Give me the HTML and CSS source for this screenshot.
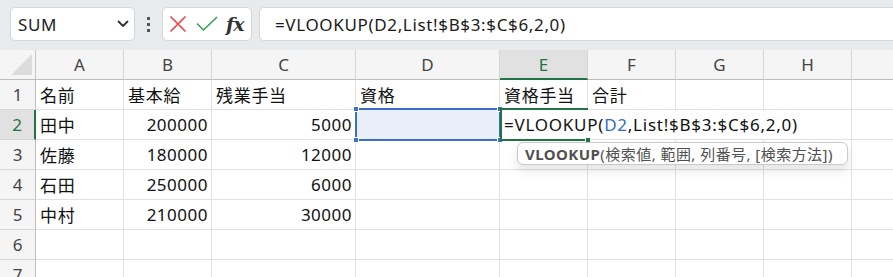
FILE: index.html
```html
<!DOCTYPE html>
<html lang="ja">
<head>
<meta charset="utf-8">
<title>Excel</title>
<link rel="stylesheet" href="styles.css">
</head>
<body>
<div class="app">
  <div class="topbar">
    <div class="namebox">
      <span class="nb-text">SUM</span>
      <svg class="chev" width="12" height="8" viewBox="0 0 12 8"><path d="M1.5 1.5 L6 6 L10.5 1.5" fill="none" stroke="#333" stroke-width="1.8" stroke-linecap="round" stroke-linejoin="round"/></svg>
    </div>
    <div class="kebab"><i></i><i></i><i></i></div>
    <div class="fxbox">
      <svg width="18" height="18" viewBox="0 0 18 18"><path d="M2 2 L16 16 M16 2 L2 16" stroke="#e5474d" stroke-width="1.7" stroke-linecap="round"/></svg>
      <svg width="22" height="16" viewBox="0 0 22 16"><path d="M1.5 8 L7.5 14 L20.5 1.5" fill="none" stroke="#3aa35a" stroke-width="1.7" stroke-linecap="round" stroke-linejoin="round"/></svg>
      <span class="fx">fx</span>
    </div>
    <div class="formula">=VLOOKUP(D2,List!$B$3:$C$6,2,0)</div>
  </div>
  <div class="sheet">
    <div class="grid">
      <div class="corner"><svg width="24" height="24" viewBox="0 0 24 24"><path d="M23 2 L23 23 L2 23 Z" fill="#dcdcdc"/></svg></div>
      <div class="ch">A</div><div class="ch">B</div><div class="ch">C</div><div class="ch">D</div><div class="ch act">E</div><div class="ch">F</div><div class="ch">G</div><div class="ch">H</div><div class="ch last"></div>

      <div class="rh">1</div><div class="c">名前</div><div class="c">基本給</div><div class="c">残業手当</div><div class="c">資格</div><div class="c">資格手当</div><div class="c">合計</div><div class="c"></div><div class="c"></div><div class="c"></div>

      <div class="rh act">2</div><div class="c">田中</div><div class="c n">200000</div><div class="c n">5000</div><div class="c"></div><div class="c span4">=VLOOKUP(<span class="ref">D2</span>,List!$B$3:$C$6,2,0)</div><div class="c"></div>

      <div class="rh">3</div><div class="c">佐藤</div><div class="c n">180000</div><div class="c n">12000</div><div class="c"></div><div class="c"></div><div class="c"></div><div class="c"></div><div class="c"></div><div class="c"></div>

      <div class="rh">4</div><div class="c">石田</div><div class="c n">250000</div><div class="c n">6000</div><div class="c"></div><div class="c"></div><div class="c"></div><div class="c"></div><div class="c"></div><div class="c"></div>

      <div class="rh">5</div><div class="c">中村</div><div class="c n">210000</div><div class="c n">30000</div><div class="c"></div><div class="c"></div><div class="c"></div><div class="c"></div><div class="c"></div><div class="c"></div>

      <div class="rh">6</div><div class="c"></div><div class="c"></div><div class="c"></div><div class="c"></div><div class="c"></div><div class="c"></div><div class="c"></div><div class="c"></div><div class="c"></div>

      <div class="rh">7</div><div class="c"></div><div class="c"></div><div class="c"></div><div class="c"></div><div class="c"></div><div class="c"></div><div class="c"></div><div class="c"></div><div class="c"></div>
    </div>
    <div class="refsel"><i class="h tl"></i><i class="h tr"></i><i class="h bl"></i><i class="h br"></i></div>
    <div class="active"><i class="fill"></i></div>
    <div class="tip"><b>VLOOKUP</b>(検索値, 範囲, 列番号, [検索方法])</div>
  </div>
</div>
</body>
</html>
```

FILE: styles.css
```css
* { box-sizing: border-box; }
html, body { margin: 0; padding: 0; }
body {
  width: 893px;
  height: 277px;
  overflow: hidden;
  background: #ffffff;
  font-family: "Noto Sans", "Noto Sans CJK JP", sans-serif;
  color: #1a1a1a;
}
.app { width: 893px; height: 277px; overflow: hidden; }

.topbar {
  height: 50px;
  background: #e8ebee;
  display: flex;
  align-items: flex-start;
  padding: 7px 0 0 10px;
}
.namebox {
  width: 125px;
  height: 34px;
  background: #fff;
  border: 1px solid #d4d6d9;
  border-radius: 5px;
  display: flex;
  align-items: center;
  justify-content: space-between;
  padding: 0 5px 0 7px;
}
.nb-text { font-size: 17px; color: #222; letter-spacing: 0.6px; }
.chev { display: block; }
.kebab {
  width: 27px;
  height: 34px;
  display: flex;
  flex-direction: column;
  align-items: center;
  justify-content: center;
  gap: 3px;
}
.kebab i { display: block; width: 3px; height: 3px; background: #555; }
.fxbox {
  width: 90px;
  height: 34px;
  background: #fff;
  border: 1px solid #d4d6d9;
  border-radius: 5px;
  display: flex;
  align-items: center;
  padding: 0 0 0 6px;
  gap: 9px;
}
.fxbox svg { display: block; }
.fx {
  font-family: "DejaVu Serif", "Liberation Serif", serif;
  font-style: italic;
  font-weight: bold;
  font-size: 19px;
  color: #333;
  letter-spacing: -1px;
  margin-left: -1px;
}
.formula {
  flex: 1;
  height: 34px;
  margin-left: 7px;
  margin-right: -10px;
  background: #fff;
  border: 1px solid #d4d6d9;
  border-radius: 5px 0 0 5px;
  display: flex;
  align-items: center;
  padding-left: 15px;
  font-size: 17px;
  letter-spacing: 0.65px;
  color: #1a1a1a;
}

.sheet { position: relative; }
.grid {
  display: grid;
  grid-template-columns: 36px 88px 88px 144px 144px 88px 88px 88px 88px 60px;
  grid-auto-rows: 30px;
}
.grid > div {
  border-right: 1px solid #e1e1e1;
  border-bottom: 1px solid #e1e1e1;
  display: flex;
  align-items: center;
  font-size: 17px;
  white-space: nowrap;
  overflow: visible;
}
.grid > .corner {
  background: #f5f5f5;
  border-right: 1px solid #c6c6c6;
  border-bottom: 1px solid #bdbdbd;
  align-items: flex-end;
  justify-content: flex-end;
  padding: 0 2px 3px 0;
}
.corner svg { display: block; }
.grid > .ch {
  background: #f5f5f5;
  border-right: 1px solid #d6d6d6;
  border-bottom: 1px solid #bdbdbd;
  justify-content: center;
  color: #444;
}
.grid > .ch.act {
  background: #e1e1e1;
  color: #217346;
  border-bottom: 2px solid #217346;
}
.grid > .rh {
  background: #f5f5f5;
  border-right: 1px solid #bdbdbd;
  border-bottom: 1px solid #d6d6d6;
  justify-content: center;
  color: #444;
}
.grid > .rh.act {
  background: #e1e1e1;
  color: #217346;
  border-right: 2px solid #217346;
}
.grid > .c { padding: 0 4px; color: #111; letter-spacing: 0.7px; }
.grid > .n { justify-content: flex-end; padding-right: 3px; letter-spacing: 0.5px; }
.grid > .span4 { grid-column: span 4; letter-spacing: 0.75px; }
.ref { color: #2f6dc6; }

.refsel {
  position: absolute;
  left: 355px;
  top: 58px;
  width: 146px;
  height: 33px;
  border: 2px solid #3a6fc7;
  background: #e9eef8;
}
.refsel .h {
  position: absolute;
  width: 6px;
  height: 6px;
  background: #3a6fc7;
  border: 1px solid #fff;
}
.h.tl { left: -4px; top: -4px; }
.h.tr { right: -4px; top: -4px; }
.h.bl { left: -4px; bottom: -4px; }
.h.br { right: -4px; bottom: -4px; }

.active {
  position: absolute;
  left: 500px;
  top: 58px;
  width: 88px;
  height: 33px;
  border: 2px solid #217346;
  border-right: none;
}
.active .fill {
  position: absolute;
  right: -3px;
  bottom: -4px;
  width: 6px;
  height: 6px;
  background: #217346;
  border: 1px solid #fff;
}

.tip {
  position: absolute;
  left: 517px;
  top: 92px;
  width: 331px;
  height: 23px;
  background: #fff;
  border: 1px solid #c9c9c9;
  border-radius: 6px;
  box-shadow: 0 6px 10px rgba(0,0,0,0.10);
  display: flex;
  align-items: center;
  padding-left: 7px;
  font-size: 15px;
  letter-spacing: 0.45px;
  color: #505050;
  white-space: nowrap;
}
.tip b { font-weight: bold; color: #505050; }
```
